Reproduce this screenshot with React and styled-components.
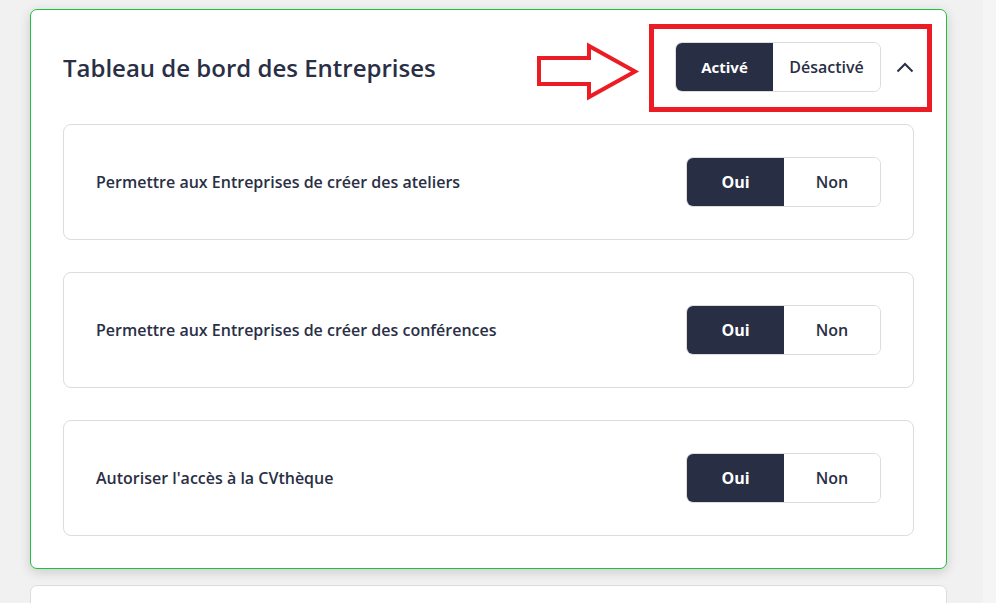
import React from "react";
import styled, { createGlobalStyle } from "styled-components";

const Global = createGlobalStyle`
  html, body { margin: 0; padding: 0; }
  body {
    font-family: "Open Sans", "Noto Sans", sans-serif;
    background: #f1f1f1;
    color: #2a2f45;
  }
  * { box-sizing: border-box; }
`;

const Page = styled.div`
  display: flex;
  height: 100vh;
  overflow: hidden;
`;

const Main = styled.main`
  flex: 1;
  padding: 9px 36px 0 30px;
  display: flex;
  flex-direction: column;
  gap: 16px;
`;

const ScrollStrip = styled.div`
  width: 13px;
  background: #f5f5f5;
`;

const Card = styled.section`
  position: relative;
  flex-shrink: 0;
  background: #fff;
  border: 1px solid ${(p) => (p.$active ? "#20c03c" : "#dcdcdc")};
  border-radius: 7px;
  box-shadow: ${(p) => (p.$active ? "0 3px 12px rgba(0,0,0,0.16)" : "none")};
  padding: 32px;
  display: flex;
  flex-direction: column;
  gap: 32px;
  min-height: 60px;
`;

const Header = styled.div`
  display: flex;
  align-items: center;
  justify-content: space-between;
  height: 50px;
`;

const Title = styled.h2`
  margin: 0;
  font-size: 24px;
  font-weight: 600;
  color: #2a2f45;
`;

const Controls = styled.div`
  display: flex;
  align-items: center;
  gap: 15px;
`;

const Segmented = styled.div`
  display: flex;
  height: 50px;
  border: 1px solid #dcdcdc;
  border-radius: 7px;
  overflow: hidden;
  background: #fff;
`;

const Segment = styled.button`
  width: ${(p) => p.$w}px;
  border: none;
  margin: 0;
  padding: 0;
  font-family: inherit;
  font-size: ${(p) => p.$fs || 16}px;
  font-weight: ${(p) => (p.$on ? 700 : 600)};
  background: ${(p) => (p.$on ? "#282e44" : "#fff")};
  color: ${(p) => (p.$on ? "#fff" : "#2a2f45")};
  cursor: pointer;
`;

const Chevron = styled.svg`
  display: block;
  width: 18px;
  height: 11px;
`;

const Row = styled.div`
  flex-shrink: 0;
  display: flex;
  align-items: center;
  justify-content: space-between;
  height: 116px;
  padding: 0 32px;
  border: 1px solid #dcdcdc;
  border-radius: 8px;
`;

const RowLabel = styled.span`
  font-size: 16px;
  font-weight: 600;
  color: #2a2f45;
`;

const Highlight = styled.div`
  position: absolute;
  left: 618px;
  top: 14px;
  width: 283px;
  height: 88px;
  border: 5px solid #ec1c24;
  pointer-events: none;
`;

const Arrow = styled.svg`
  position: absolute;
  left: 505px;
  top: 32px;
  width: 104px;
  height: 60px;
  pointer-events: none;
`;

const rows = [
  "Permettre aux Entreprises de créer des ateliers",
  "Permettre aux Entreprises de créer des conférences",
  "Autoriser l'accès à la CVthèque",
];

export default function App() {
  return (
    <Page>
      <Global />
      <Main>
        <Card $active>
          <Header>
            <Title>Tableau de bord des Entreprises</Title>
            <Controls>
              <Segmented>
                <Segment $on $w={97} $fs={15}>Activé</Segment>
                <Segment $w={107}>Désactivé</Segment>
              </Segmented>
              <Chevron viewBox="0 0 18 11">
                <polyline
                  points="1.5,9.5 9,2 16.5,9.5"
                  fill="none"
                  stroke="#2a2f45"
                  strokeWidth="2"
                />
              </Chevron>
            </Controls>
          </Header>
          {rows.map((r) => (
            <Row key={r}>
              <RowLabel>{r}</RowLabel>
              <Segmented>
                <Segment $on $w={97}>Oui</Segment>
                <Segment $w={96}>Non</Segment>
              </Segmented>
            </Row>
          ))}
          <Highlight />
          <Arrow viewBox="0 0 104 60">
            <polygon
              points="3,16 53,16 53,4 99,29.5 53,55 53,42 3,42"
              fill="#fff"
              stroke="#ec1c24"
              strokeWidth="4"
              strokeLinejoin="miter"
            />
          </Arrow>
        </Card>
        <Card />
      </Main>
      <ScrollStrip />
    </Page>
  );
}
